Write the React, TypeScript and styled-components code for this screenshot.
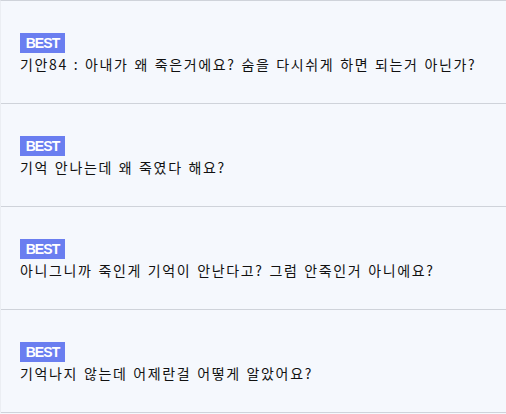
import React from "react";
import styled, { createGlobalStyle } from "styled-components";

const Global = createGlobalStyle`
  html, body { margin: 0; padding: 0; background: #f5f8fd; }
  body { font-family: "Noto Sans CJK KR", "Noto Sans", sans-serif; }
`;

const List = styled.div`
  display: flex;
  flex-direction: column;
  width: 506px;
  border-top: 1px solid #cfd3da;
  border-left: 1px solid #ebeef3;
  box-sizing: border-box;
`;

const Row = styled.div`
  display: flex;
  flex-direction: column;
  align-items: flex-start;
  height: 103px;
  padding: 32px 0 0 19px;
  box-sizing: border-box;
  border-bottom: 1px solid #cfd3da;
  background: #f5f8fd;
`;

const Badge = styled.span`
  display: inline-flex;
  align-items: center;
  justify-content: center;
  width: 45px;
  height: 20px;
  background: #6a7ef0;
  color: #ffffff;
  font-family: "Liberation Sans", Arial, sans-serif;
  font-weight: bold;
  font-size: 14px;
  letter-spacing: -0.9px;
`;

const Text = styled.div`
  margin-top: 3px;
  font-size: 14px;
  line-height: 16px;
  color: #111111;
  letter-spacing: 1.65px;
  word-spacing: 1px;
`;

const items = [
  "기안84 : 아내가 왜 죽은거에요? 숨을 다시쉬게 하면 되는거 아닌가?",
  "기억 안나는데 왜 죽였다 해요?",
  "아니그니까 죽인게 기억이 안난다고? 그럼 안죽인거 아니에요?",
  "기억나지 않는데 어제란걸 어떻게 알았어요?",
];

export default function App() {
  return (
    <>
      <Global />
      <List>
        {items.map((t, i) => (
          <Row key={i}>
            <Badge>BEST</Badge>
            <Text>{t}</Text>
          </Row>
        ))}
      </List>
    </>
  );
}
